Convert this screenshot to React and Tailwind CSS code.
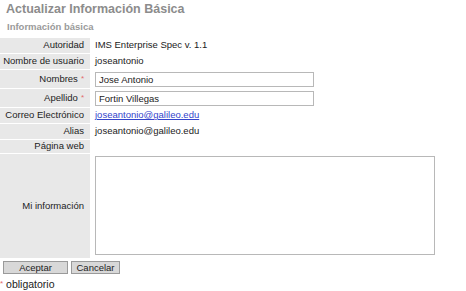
import React from 'react';

const rows = [
  { label: 'Autoridad', value: 'IMS Enterprise Spec v. 1.1', h: 'h-[15px]' },
  { label: 'Nombre de usuario', value: 'joseantonio', h: 'h-[15px]' },
  { label: 'Nombres', input: 'Jose Antonio', required: true, h: 'h-[18px]' },
  { label: 'Apellido', input: 'Fortin Villegas', required: true, h: 'h-[18px]' },
  { label: 'Correo Electrónico', link: 'joseantonio@galileo.edu', h: 'h-[15px]' },
  { label: 'Alias', value: 'joseantonio@galileo.edu', h: 'h-[15px]' },
  { label: 'Página web', value: '', h: 'h-[13px]' },
];

function App() {
  return (
    <div className="w-[466px] h-[291px] bg-white overflow-hidden font-['Liberation_Sans',Arial,sans-serif] text-[9.5px] text-[#222]">
      {/* encabezado */}
      <h1 className="pl-[6px] pt-[2px] text-[12.5px] leading-[15px] font-bold text-[#8c8c8c]">
        Actualizar Información Básica
      </h1>
      <h2 className="pl-[7px] mt-[4px] text-[9.5px] leading-[12px] font-bold text-[#9a9a9a]">
        Información básica
      </h2>

      {/* formulario */}
      <div className="mt-[5px] flex flex-col gap-px">
        {rows.map((row, i) => (
          <div key={i} className={`flex ${row.h}`}>
            <div className="w-[90px] shrink-0 bg-[#e8e8e8] flex items-center justify-end pr-[6px]">
              {row.label}
              {row.required && <span className="ml-[3px] text-[#e36b6b] text-[8px]">*</span>}
            </div>
            <div className="flex items-center pl-[5px]">
              {row.value}
              {row.input && (
                <input
                  defaultValue={row.input}
                  className="w-[219px] h-[15px] border border-[#b8b8b8] px-[3px] text-[9.5px] outline-none"
                />
              )}
              {row.link && <a className="text-[#3344cc] underline">{row.link}</a>}
            </div>
          </div>
        ))}
        <div className="flex h-[104px]">
          <div className="w-[90px] shrink-0 bg-[#e8e8e8] flex items-center justify-end pr-[6px]">
            Mi información
          </div>
          <div className="pl-[5px] pt-[2px]">
            <textarea className="w-[340px] h-[99px] border border-[#b8b8b8] resize-none outline-none" />
          </div>
        </div>
      </div>

      {/* botones */}
      <div className="flex gap-[3px] pl-[3px] mt-[3px]">
        <button className="w-[65px] h-[13px] bg-[#d8d8d8] border border-[#9a9a9a] text-[9.5px] leading-none text-[#222]">
          Aceptar
        </button>
        <button className="w-[49px] h-[13px] bg-[#d8d8d8] border border-[#9a9a9a] text-[9.5px] leading-none text-[#222]">
          Cancelar
        </button>
      </div>
      <div className="mt-[4px] text-[10.5px] leading-[12px] text-[#222]">
        <span className="text-[#e36b6b] text-[8px] align-top">*</span> obligatorio
      </div>
    </div>
  );
}

export default App;
